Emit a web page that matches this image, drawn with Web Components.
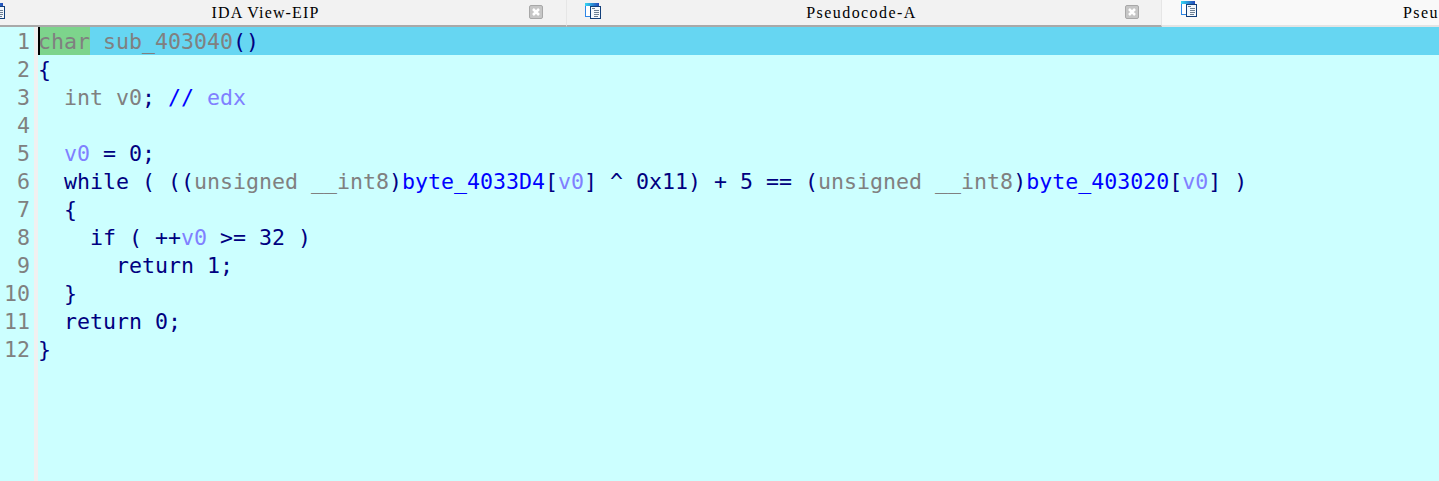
<!DOCTYPE html>
<html>
<head>
<meta charset="utf-8">
<style>
  html, body { margin: 0; height: 100%; overflow: hidden; background: #ccffff; }
  body { display: flex; flex-direction: column; }
</style>
</head>
<body>
<ida-tabs>
  <ida-tab closable width="567" inset="-11" gap="23" spacing="1.15">IDA View-EIP</ida-tab>
  <ida-tab closable width="595" inset="18" gap="22" spacing="1.43">Pseudocode-A</ida-tab>
  <ida-tab active width="277" inset="19" spacing="1.43">Pseu</ida-tab>
</ida-tabs>
<ida-code>
  <ida-line n="1" current><ida-tok k="sel">char</ida-tok><ida-tok k="kw"> sub_403040</ida-tok>()</ida-line>
  <ida-line n="2">{</ida-line>
  <ida-line n="3">  <ida-tok k="kw">int v0</ida-tok>; <ida-tok k="cm">//</ida-tok> <ida-tok k="var">edx</ida-tok></ida-line>
  <ida-line n="4"></ida-line>
  <ida-line n="5">  <ida-tok k="var">v0</ida-tok> = 0;</ida-line>
  <ida-line n="6">  while ( ((<ida-tok k="kw">unsigned __int8</ida-tok>)<ida-tok k="glob">byte_4033D4</ida-tok>[<ida-tok k="var">v0</ida-tok>] ^ 0x11) + 5 == (<ida-tok k="kw">unsigned __int8</ida-tok>)<ida-tok k="glob">byte_403020</ida-tok>[<ida-tok k="var">v0</ida-tok>] )</ida-line>
  <ida-line n="7">  {</ida-line>
  <ida-line n="8">    if ( ++<ida-tok k="var">v0</ida-tok> &gt;= 32 )</ida-line>
  <ida-line n="9">      return 1;</ida-line>
  <ida-line n="10">  }</ida-line>
  <ida-line n="11">  return 0;</ida-line>
  <ida-line n="12">}</ida-line>
</ida-code>
<script>
const tabsTemplate = document.createElement('template');
tabsTemplate.innerHTML = `
  <style>
    :host {
      display: flex;
      flex: none;
      height: 27px;
      background: #f2f2f2;
      overflow: hidden;
    }
  </style>
  <slot></slot>
`;

class IdaTabs extends HTMLElement {
  constructor() {
    super();
    this.attachShadow({ mode: 'open' }).appendChild(tabsTemplate.content.cloneNode(true));
  }
}

const tabTemplate = document.createElement('template');
tabTemplate.innerHTML = `
  <style>
    :host {
      display: flex;
      flex: none;
      box-sizing: border-box;
      height: 27px;
      border-bottom: 2px solid #a9a9a9;
      border-right: 1px solid #e6e6e6;
      font: 16px "Liberation Serif", serif;
      color: #000;
    }
    :host([active]) {
      background: #f9f9f9;
      border-bottom: 2px solid #e4e4e4;
      border-right: 0;
    }
    .icon {
      flex: none;
      width: 16px;
      height: 16px;
      margin-top: 3px;
    }
    :host([active]) .icon { margin-top: 1px; }
    .title {
      flex: 1;
      min-width: 0;
      padding-right: 3px;
      text-align: center;
      line-height: 25px;
      white-space: nowrap;
    }
    :host([active]) .title { padding: 0; text-align: left; margin-left: 206px; }
    .close {
      flex: none;
      width: 14px;
      height: 14px;
      margin-top: 5px;
    }
    :host(:not([closable])) .close { display: none; }
  </style>
  <svg class="icon" viewBox="0 0 16 16">
    <defs>
      <linearGradient id="head">
        <stop offset="0" stop-color="#35d8f4"/>
        <stop offset="1" stop-color="#2348b8"/>
      </linearGradient>
    </defs>
    <rect x=".5" y=".5" width="13" height="13" fill="#fff" stroke="#2e86e6"/>
    <rect x="0" y="0" width="14" height="3" fill="url(#head)"/>
    <rect x="5.500" y="3.500" width="10" height="12" fill="#f4f8fc" stroke="#123f7a"/>
    <path d="M7 5.500h3M9 7.500h5M9 9.500h5M9 11.500h5M9 13.500h4" stroke="#6d7f92" fill="none"/>
  </svg>
  <div class="title"><slot></slot></div>
  <svg class="close" viewBox="0 0 14 14">
    <rect x=".5" y=".5" width="13" height="13" rx="1.500" fill="#c6c6c6" stroke="#a8a8a8"/>
    <path d="M4 4l6 6M10 4l-6 6" stroke="#fff" stroke-width="2.500" fill="none"/>
  </svg>
`;

class IdaTab extends HTMLElement {
  constructor() {
    super();
    this.attachShadow({ mode: 'open' }).appendChild(tabTemplate.content.cloneNode(true));
  }

  connectedCallback() {
    this.style.width = this.getAttribute('width') + 'px';
    this.style.letterSpacing = this.getAttribute('spacing') + 'px';
    this.shadowRoot.querySelector('.icon').style.marginLeft = this.getAttribute('inset') + 'px';
    this.shadowRoot.querySelector('.close').style.marginRight = (this.getAttribute('gap') || 0) + 'px';
  }
}

const codeTemplate = document.createElement('template');
codeTemplate.innerHTML = `
  <style>
    :host {
      display: block;
      flex: 1;
      min-height: 0;
      overflow: hidden;
      background: linear-gradient(to right, #ccffff 34px, #f0f0f0 34px, #f0f0f0 38px, #ccffff 38px);
      font: 21.6px/30px "DejaVu Sans Mono", monospace;
      color: #000080;
    }
  </style>
  <slot></slot>
`;

class IdaCode extends HTMLElement {
  constructor() {
    super();
    this.attachShadow({ mode: 'open' }).appendChild(codeTemplate.content.cloneNode(true));
  }
}

const lineTemplate = document.createElement('template');
lineTemplate.innerHTML = `
  <style>
    :host {
      display: flex;
      height: 28px;
    }
    .num {
      flex: none;
      box-sizing: border-box;
      width: 38px;
      padding-right: 8px;
      text-align: right;
      color: #808080;
    }
    .text {
      flex: 1;
      min-width: 0;
      position: relative;
      white-space: pre;
    }
    :host([current]) .text { background: #66d6f2; }
    :host([current]) .text::before {
      content: "";
      position: absolute;
      left: 0;
      top: 0;
      width: 2px;
      height: 100%;
      background: #000;
    }
  </style>
  <div class="num"></div>
  <div class="text"><slot></slot></div>
`;

class IdaLine extends HTMLElement {
  constructor() {
    super();
    this.attachShadow({ mode: 'open' }).appendChild(lineTemplate.content.cloneNode(true));
  }

  connectedCallback() {
    this.shadowRoot.querySelector('.num').textContent = this.getAttribute('n');
  }
}

const tokTemplate = document.createElement('template');
tokTemplate.innerHTML = `<style>
    :host { display: inline; }
    :host([k="kw"]) { color: #808080; }
    :host([k="sel"]) {
      display: inline-block;
      height: 28px;
      vertical-align: top;
      color: #808080;
      background: #7dd48c;
    }
    :host([k="cm"]) { color: #0000ff; }
    :host([k="var"]) { color: #8080ff; }
    :host([k="glob"]) { color: #0000ff; }
  </style><slot></slot>`;

class IdaTok extends HTMLElement {
  constructor() {
    super();
    this.attachShadow({ mode: 'open' }).appendChild(tokTemplate.content.cloneNode(true));
  }
}

customElements.define('ida-tabs', IdaTabs);
customElements.define('ida-tab', IdaTab);
customElements.define('ida-code', IdaCode);
customElements.define('ida-line', IdaLine);
customElements.define('ida-tok', IdaTok);
</script>
</body>
</html>
